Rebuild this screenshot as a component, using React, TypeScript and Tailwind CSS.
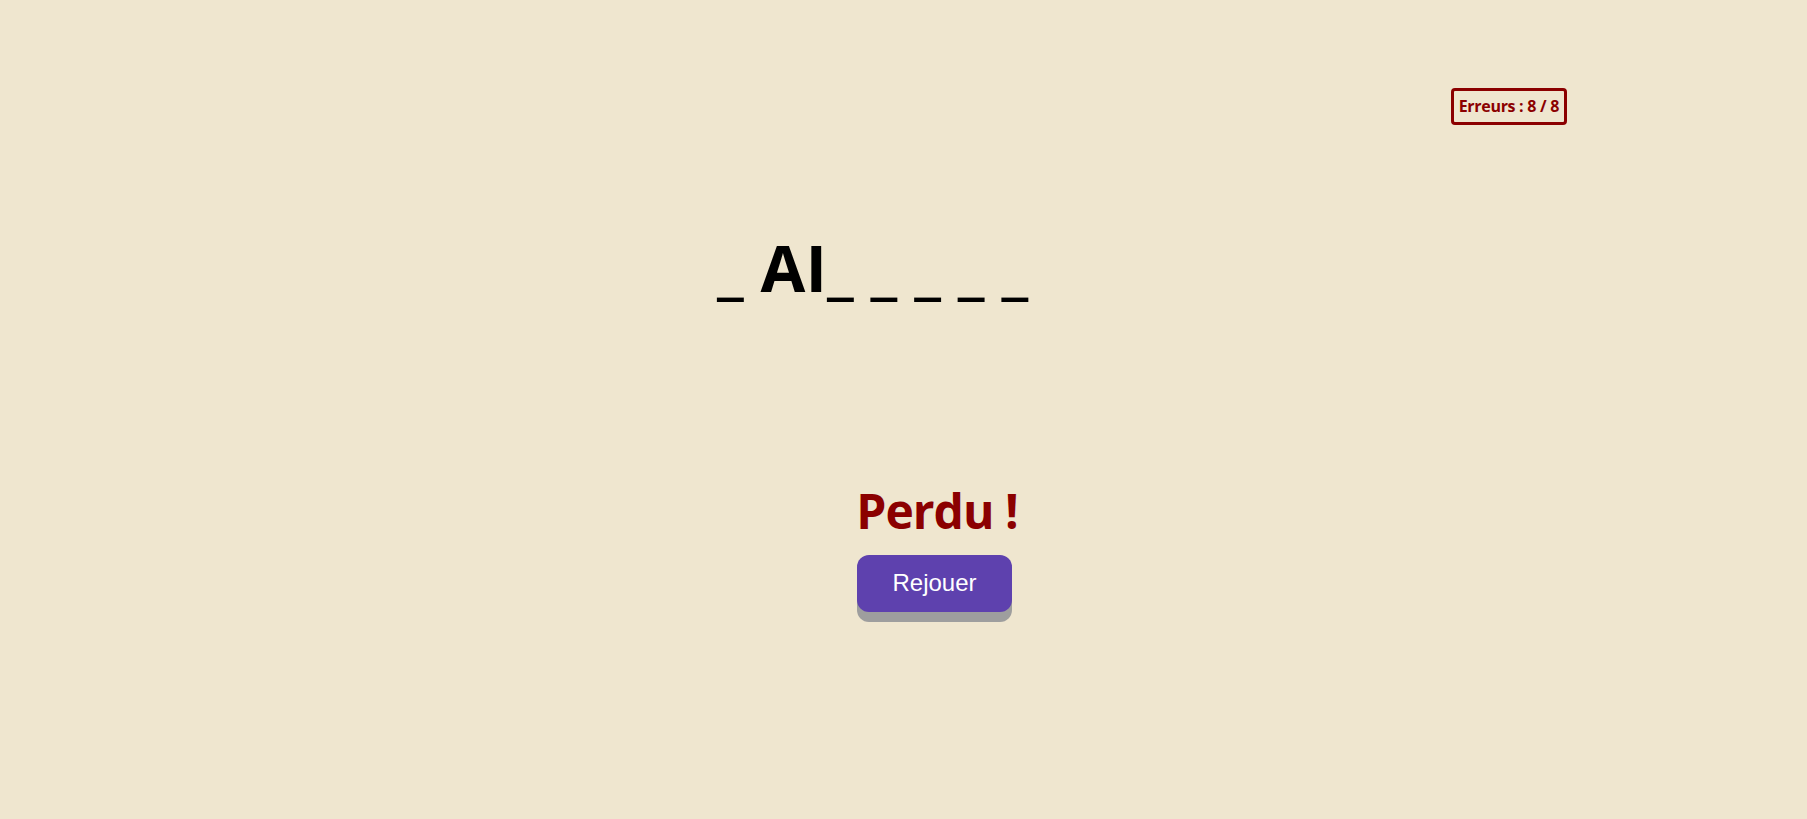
import { useState } from "react";

const WORD = "MAILLOTS";

const App = () => {
  const [errors] = useState(8);
  const maxErrors = 8;
  const guessed = ["A", "I"];

  // hidden letters show as "_ " like the original game
  const display = WORD.split("")
    .map((l, i) => (guessed.includes(l) && i > 0 && i < 3 ? l : "_ "))
    .join("");

  return (
    <div className="min-h-screen w-full bg-[#efe6cf] font-['Open_Sans',sans-serif]">
      {/* Top bar - error counter */}
      <div className="flex justify-end pt-[88px] pr-[240px]">
        <div className="border-[3px] border-[#8b0000] rounded-[4px] px-[5px] py-[4px] text-[16px] leading-[23px] font-bold text-[#8b0000] tracking-[-0.3px]">
          Erreurs : {errors} / {maxErrors}
        </div>
      </div>

      {/* Word */}
      <div className="flex justify-center pr-[45px] mt-[94px]">
        <h1 className="text-[65px] font-bold text-black whitespace-pre-wrap">
          {display}
        </h1>
      </div>

      {/* Result */}
      <div className="flex flex-col items-center pl-[67px] mt-[158px]">
        <h2 className="text-[48px] font-bold text-[#8b0000] tracking-[-1px]">Perdu !</h2>
        <button className="mt-[8px] mr-[5px] h-[57px] px-[35px] rounded-[12px] bg-[#5e41ae] text-white text-[24px] font-['Liberation_Sans',Arial,sans-serif] shadow-[0_10px_0_#9e9e9e]">
          Rejouer
        </button>
      </div>
    </div>
  );
};

export default App;
